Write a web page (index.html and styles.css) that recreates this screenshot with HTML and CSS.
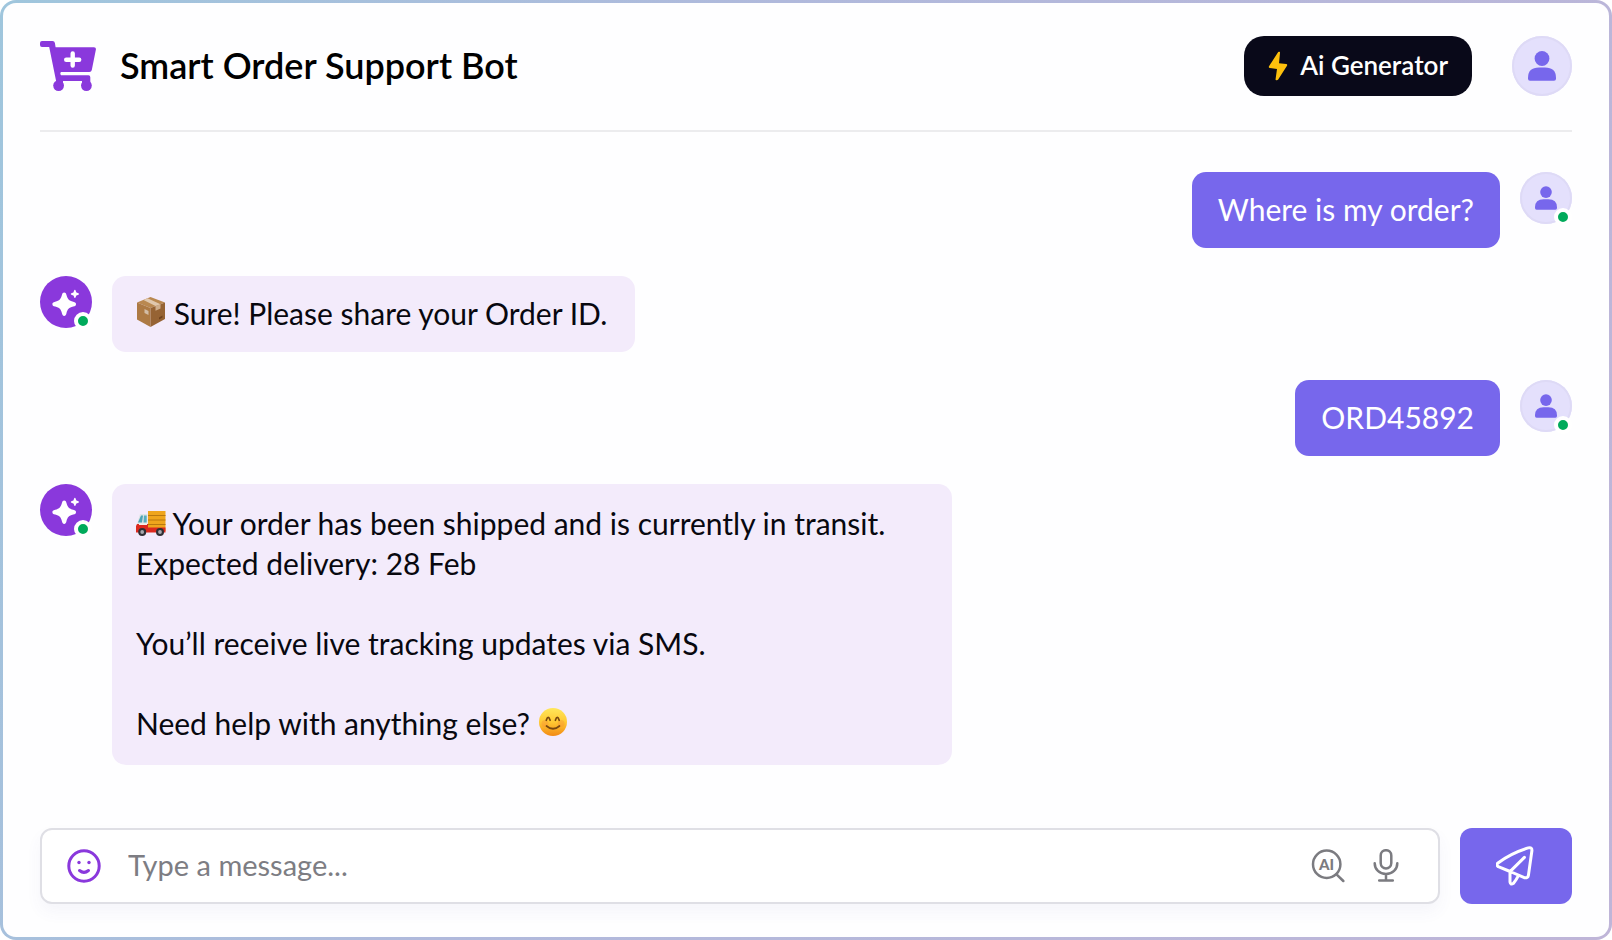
FILE: index.html
```html
<!DOCTYPE html>
<html lang="en">
<head>
<meta charset="utf-8">
<meta name="viewport" content="width=device-width, initial-scale=1">
<title>Smart Order Support Bot</title>
<link rel="stylesheet" href="styles.css">
</head>
<body>
<svg class="defs" width="0" height="0" aria-hidden="true">
  <defs>
    <symbol id="person" viewBox="0 0 28 30">
      <circle cx="14" cy="7.500" r="7.400"/>
      <path d="M2 29.800Q0 29.800 0 27.800V26.800Q0 16.500 11 16.500H17Q28 16.500 28 26.800V27.800Q28 29.800 26 29.800Z"/>
    </symbol>
    <symbol id="sparkle" viewBox="0 0 28 28">
      <path d="M12.2 4.6C13.4 4.6 14 5.4 14.4 6.8C15.6 11.2 16.8 12.6 21.2 13.8C23.4 14.4 24 15 24 16.2S23.4 18 21.2 18.6C16.8 19.8 15.6 21.2 14.4 25.4C14 27 13.4 27.9 12.2 27.9S10.4 27 10 25.4C8.8 21.2 7.6 19.8 3.2 18.6C1 18 .4 17.4 .4 16.2S1 14.4 3.2 13.8C7.6 12.6 8.8 11.2 10 6.8C10.4 5.4 11 4.6 12.2 4.6Z"/>
      <path d="M22.9 1.8C23.7 1.8 23.9 4 24.4 4.4S27.1 5 27.1 5.9S24.9 6.900 24.400 7.400S23.700 10 22.900 10S21.900 7.900 21.400 7.400S18.700 6.800 18.700 5.900S20.900 4.900 21.400 4.400S22.100 1.800 22.900 1.800Z"/>
    </symbol>
  </defs>
</svg>

<main class="card">
  <header class="header">
    <svg class="logo" viewBox="0 0 56 50" aria-hidden="true">
      <path fill="#8a38dc" d="M2 0H12.500Q14.600 0 14.900 2L15.600 6.300H54Q56.300 6.300 55.900 8.600L51.800 29Q51.400 31 49.400 31H21Q19.600 32.500 21 34.300H48.500Q50.300 34.300 50.300 36.200V42H42V40H23V42H16.500L9.200 6H2Q0 6 0 4V2Q0 0 2 0Z"/>
      <circle cx="18.600" cy="44.600" r="5.400" fill="#8a38dc"/>
      <circle cx="46.400" cy="44.600" r="5.400" fill="#8a38dc"/>
      <path d="M32.700 12.500V24.500M26.200 18.700H39.200" stroke="#fff" stroke-width="4.400" stroke-linecap="round"/>
    </svg>
    <h1 class="title">Smart Order Support Bot</h1>
    <button class="generator" type="button">
      <svg class="bolt" viewBox="0 0 20 30" aria-hidden="true"><path fill="#fdc00d" d="M10.200 1Q10.800 .4 11.500 .8T12 2L11 12.300L18.200 13Q19.700 13.300 19 14.700L10.200 28.500Q9.500 29.400 8.400 29.200T7.600 28L9 17.900L1.600 16.900Q.3 16.500 1 15.200Z"/></svg>
      <span>Ai Generator</span>
    </button>
    <button class="avatar avatar-large" type="button" aria-label="Account"><svg class="person"><use href="#person"/></svg></button>
  </header>

  <section class="chat" aria-label="Conversation">
    <div class="row row-user">
      <p class="bubble bubble-user">Where is my order?</p>
      <div class="avatar"><svg class="person"><use href="#person"/></svg><span class="status"></span></div>
    </div>
    <div class="row">
      <div class="avatar avatar-bot"><svg class="sparkle"><use href="#sparkle"/></svg><span class="status"></span></div>
      <p class="bubble bubble-bot"><svg class="emoji" viewBox="0 0 30 30" role="img" aria-label="Package">
        <path fill="#b98850" d="M1 5.500L14.500 0L29 5.500L14.500 11Z"/><path fill="#ad7a44" d="M1 5.500L14.500 11V30L1 22.500Z"/><path fill="#966334" d="M29 5.500L14.500 11V30L29 22Z"/>
        <path fill="#e0c8ae" d="M7.500 2.900L11.500 1.200L24.500 7.200L19.500 9.100Z"/><path fill="#cfae8c" d="M19.500 9.100L24.500 7.200V11.500L19.500 13.700Z"/><path fill="#d3bda6" d="M8.500 12L12.500 14V18L8.500 16Z"/><path fill="#70421e" d="M23 20.500L26.500 18.600V20.500L23 22.400Z"/>
      </svg> Sure! Please share your Order ID.</p>
    </div>
    <div class="row row-user">
      <p class="bubble bubble-user">ORD45892</p>
      <div class="avatar"><svg class="person"><use href="#person"/></svg><span class="status"></span></div>
    </div>
    <div class="row">
      <div class="avatar avatar-bot"><svg class="sparkle"><use href="#sparkle"/></svg><span class="status"></span></div>
      <div class="bubble bubble-bot bubble-long">
        <p><svg class="emoji" viewBox="0 -3 30 30" role="img" aria-label="Delivery truck">
          <path fill="#efa51c" d="M12 1H29.500V21H12Z"/><path d="M12 5.500H29.500M12 10H29.500M12 14.500H29.500" stroke="#b9780f" stroke-width="1"/>
          <path fill="#dfe5e6" d="M4 4H11.500V14H1Z"/><path fill="#4ca5b5" d="M5 5.500H7L6 12.500H2Z"/><path fill="#57aebd" d="M8 5.500H10.700V12.500H7.500Z"/>
          <path fill="#dc2a1e" d="M1 14H12V17.500H29.500V22.500H0V16Z"/><path fill="#f4efe7" d="M3 13.500H11V15H3Z"/>
          <circle cx="6.200" cy="22" r="4" fill="#303035"/><circle cx="6.200" cy="22" r="1.900" fill="#a7a9ad"/><circle cx="24" cy="22" r="4" fill="#303035"/><circle cx="24" cy="22" r="1.900" fill="#a7a9ad"/>
        </svg> Your order has been shipped and is currently in transit.<br>Expected delivery: 28 Feb</p>
        <p>You’ll receive live tracking updates via SMS.</p>
        <p>Need help with anything else? <svg class="emoji" viewBox="0 0 30 30" role="img" aria-label="Smiling face">
          <defs><linearGradient id="face" x1="0" y1="0" x2="0" y2="1"><stop offset="0" stop-color="#ffe75b"/><stop offset=".5" stop-color="#ffc933"/><stop offset="1" stop-color="#f28a14"/></linearGradient></defs>
          <circle cx="15" cy="15" r="14" fill="url(#face)"/><circle cx="7" cy="16.500" r="3.500" fill="#f78a3a" opacity=".35"/><circle cx="23" cy="16.500" r="3.500" fill="#f78a3a" opacity=".35"/>
          <path d="M8.300 13.300Q10.200 7.500 12.100 13.300M17.400 13.300Q19.300 7.500 21.200 13.300M8.500 19Q15 24.500 21.500 19" fill="none" stroke="#79480f" stroke-width="1.700" stroke-linecap="round"/>
        </svg></p>
      </div>
    </div>
  </section>

  <form class="composer">
    <div class="field">
      <button class="icon-button" type="button" aria-label="Insert emoji">
        <svg class="icon icon-smile" viewBox="0 0 34 34"><circle cx="17" cy="17" r="15.200"/><path d="M12.500 21.500Q17 25.300 21.500 21.500"/><circle class="eye" cx="12" cy="13.500" r="1.700"/><circle class="eye" cx="22" cy="13.500" r="1.700"/></svg>
      </button>
      <input class="message" type="text" placeholder="Type a message..." aria-label="Message">
      <button class="icon-button" type="button" aria-label="AI search">
        <svg class="icon" viewBox="0 0 34 34"><circle cx="15.700" cy="15.300" r="13.700"/><path d="M25.500 25.300L32.300 32"/><text class="ai" x="15.500" y="20.700">AI</text></svg>
      </button>
      <button class="icon-button" type="button" aria-label="Voice message">
        <svg class="icon" viewBox="0 0 34 34"><rect x="11.700" y="1.200" width="10.600" height="18.200" rx="5.300"/><path d="M5.700 14.200C5.700 20.500 10.500 25 17 25S28.300 20.500 28.300 14.200M17 25V31.200M10.200 31.500H23.800"/></svg>
      </button>
    </div>
    <button class="send" type="submit" aria-label="Send">
      <svg class="plane" viewBox="2 0 40 40"><path d="M4 17Q1.800 18.900 4.300 20.700L17.300 26L30.300 31.700Q33.800 32.500 34.400 29.400L37.900 4.800Q38.200 .8 34.300 1.900Q17 7.200 4 17ZM16 25.600L30.400 11.400M16 25.600V36Q16.500 39.400 19.500 37.300Q22.500 33.500 24.400 29.600"/></svg>
    </button>
  </form>
</main>
</body>
</html>
```
FILE: styles.css
```css
* { box-sizing: border-box; }

body {
  margin: 0;
  background: #fff;
  color: #08080f;
  font-family: Lato, "Noto Sans", sans-serif;
}

p, h1 { margin: 0; }

button {
  padding: 0;
  border: 0;
  background: none;
  font: inherit;
  cursor: pointer;
}

.defs { position: absolute; }

.card {
  display: flex;
  flex-direction: column;
  min-height: 100vh;
  padding: 33px 37px;
  border: 3px solid transparent;
  border-radius: 16px;
  background:
    linear-gradient(#fefeff, #fefeff) padding-box,
    linear-gradient(110deg, #9fc6dd, #b0b9dc 40%, #bfb5d8) border-box;
}

.header {
  display: flex;
  align-items: center;
  padding-bottom: 34px;
  border-bottom: 2px solid #ececee;
}

.logo {
  width: 56px;
  height: 50px;
  margin-right: 24px;
}

.title {
  flex: 1;
  padding-bottom: 2px;
  color: #000;
  font-size: 36px;
  font-weight: 600;
  line-height: 48px;
}

.generator {
  display: flex;
  align-items: center;
  gap: 12px;
  height: 60px;
  margin-right: 40px;
  padding: 0 24px;
  border-radius: 20px;
  background: #090919;
  color: #fff;
  font-size: 26px;
  font-weight: 600;
  line-height: 32px;
}

.generator span { padding-bottom: 2px; }

.bolt {
  width: 20px;
  height: 30px;
}

.avatar {
  position: relative;
  display: flex;
  flex: none;
  justify-content: center;
  align-items: center;
  width: 52px;
  height: 52px;
  border-radius: 50%;
  background: #e4e0fc;
  box-shadow: inset 0 0 0 2px #dedaf6;
}

.avatar-large {
  width: 60px;
  height: 60px;
}

.avatar-bot {
  background: #8a38dc;
  box-shadow: none;
}

.person {
  width: 22px;
  height: 24px;
  fill: #7767ec;
}

.avatar-large .person {
  width: 28px;
  height: 30px;
}

.sparkle {
  width: 28px;
  height: 28px;
  fill: #fff;
}

.status {
  position: absolute;
  right: 0;
  bottom: -2px;
  width: 18px;
  height: 18px;
  border: 4px solid #fff;
  border-radius: 50%;
  background: #00aa5b;
}

.chat {
  display: flex;
  flex: 1;
  flex-direction: column;
  gap: 28px;
  padding: 40px 0;
}

.row {
  display: flex;
  align-items: flex-start;
  gap: 20px;
}

.row-user { justify-content: flex-end; }

.bubble {
  padding: 17px 28px 19px 24px;
  border-radius: 14px;
  font-size: 30px;
  line-height: 40px;
}

.bubble-user {
  padding: 17px 26px 19px;
  background: #7767ec;
  color: #fff;
}

.bubble-bot { background: #f3ebfb; }

.bubble-long {
  display: flex;
  flex-direction: column;
  gap: 40px;
  width: 840px;
  padding: 19px 24px 22px;
}

.emoji {
  width: 30px;
  height: 30px;
  vertical-align: -2px;
}

.composer {
  display: flex;
  gap: 20px;
}

.field {
  display: flex;
  flex: 1;
  align-items: center;
  gap: 24px;
  height: 76px;
  padding: 0 35px 0 25px;
  border: 2px solid #dfdfe5;
  border-radius: 12px;
  background: #fff;
  box-shadow: 0 8px 16px rgba(80, 80, 160, 0.05);
}

.message {
  flex: 1;
  min-width: 0;
  padding: 0 0 4px 3px;
  border: 0;
  outline: 0;
  background: none;
  color: #08080f;
  font: inherit;
  font-size: 29px;
}

.message::placeholder {
  color: #7d7d83;
  opacity: 1;
}

.icon-button {
  display: flex;
  flex: none;
}

.icon {
  width: 34px;
  height: 34px;
  fill: none;
  stroke: #7b7b80;
  stroke-width: 2.5;
  stroke-linecap: round;
}

.icon-smile {
  stroke: #8a38dc;
  stroke-width: 3;
}

.eye {
  fill: #8a38dc;
  stroke: none;
}

.ai {
  fill: #7b7b80;
  stroke: none;
  font-size: 15px;
  font-weight: 900;
  text-anchor: middle;
}

.send {
  display: flex;
  justify-content: center;
  align-items: center;
  width: 112px;
  border-radius: 12px;
  background: #7767ec;
}

.plane {
  width: 40px;
  height: 40px;
  fill: none;
  stroke: #fff;
  stroke-width: 3;
  stroke-linecap: round;
  stroke-linejoin: round;
}
```
